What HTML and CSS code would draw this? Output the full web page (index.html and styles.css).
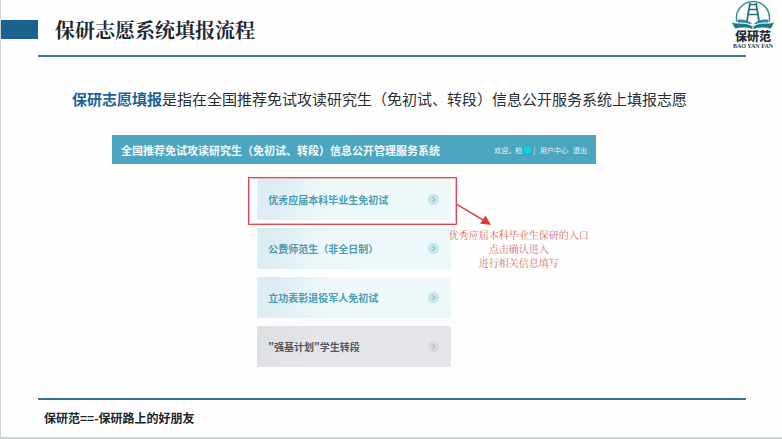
FILE: index.html
```html
<!DOCTYPE html>
<html lang="zh-CN">
<head>
<meta charset="utf-8">
<title>保研志愿系统填报流程</title>
<link rel="stylesheet" href="styles.css">
</head>
<body>
<div class="slide">
  <header class="head">
    <span class="marker"></span>
    <h1 class="title">保研志愿系统填报流程</h1>
    <div class="logo">
      <svg class="logo-mark" viewBox="0 0 44 30" aria-hidden="true">
        <path d="M6 22A16.500 16.500 0 1 1 38 22" fill="none" stroke="#3f8e9b" stroke-width="1.500"/>
        <path d="M19 3L16 21M25 3L28 21" fill="none" stroke="#2a7282" stroke-width="1.800"/>
        <path d="M19 4.500H25M18.500 9.500H25.500M17.500 14.500H26.500" stroke="#2a7282" stroke-width="1.600"/>
        <path d="M7 19.500Q17 19 21.500 24.500Q14 22 7 22.500ZM37 19.500Q27 19 22.500 24.500Q30 22 37 22.500Z" fill="#2d8ba0"/>
        <path d="M1 22.500L5 23.500Q17 23 21.500 26.500V29Q14 26.500 4 28.500ZM43 22.500L39 23.500Q27 23 22.500 26.500V29Q30 26.500 40 28.500Z" fill="#1b7891"/>
      </svg>
      <span class="logo-name">保研范</span>
      <span class="logo-latin">BAO YAN FAN</span>
    </div>
  </header>
  <main class="content">
    <p class="lead"><strong>保研志愿填报</strong>是指在全国推荐免试攻读研究生（免初试、转段）信息公开服务系统上填报志愿</p>
    <section class="panel">
      <div class="bar">
        <h2 class="bar-title">全国推荐免试攻读研究生（免初试、转段）信息公开管理服务系统</h2>
        <nav class="user">
          <span>欢迎，柏</span><i class="dot"></i><span>|</span>
          <a href="#">用户中心</a>
          <a href="#">退出</a>
        </nav>
      </div>
      <div class="entries">
        <a class="card" href="#"><span>优秀应届本科毕业生免初试</span><svg class="go" viewBox="0 0 11 11"><circle cx="5.500" cy="5.500" r="5.500"/><path d="M4.700 3.500L6.700 5.500L4.700 7.500"/></svg></a>
        <a class="card" href="#"><span>公费师范生（非全日制）</span><svg class="go" viewBox="0 0 11 11"><circle cx="5.500" cy="5.500" r="5.500"/><path d="M4.700 3.500L6.700 5.500L4.700 7.500"/></svg></a>
        <a class="card" href="#"><span>立功表彰退役军人免初试</span><svg class="go" viewBox="0 0 11 11"><circle cx="5.500" cy="5.500" r="5.500"/><path d="M4.700 3.500L6.700 5.500L4.700 7.500"/></svg></a>
        <a class="card muted" href="#"><span>"强基计划"学生转段</span><svg class="go" viewBox="0 0 11 11"><circle cx="5.500" cy="5.500" r="5.500"/><path d="M4.700 3.500L6.700 5.500L4.700 7.500"/></svg></a>
        <div class="frame"></div>
        <svg class="arrow" viewBox="0 0 36 24" aria-hidden="true"><path d="M0 2L28 18.500" stroke="#d94a4c" stroke-width="1.500"/><path d="M35 23L24 21.500L29.500 13.500Z" fill="#dc3b3d"/></svg>
        <p class="note">优秀应届本科毕业生保研的入口<br>点击确认进入<br>进行相关信息填写</p>
      </div>
    </section>
  </main>
  <footer class="foot">保研范==-保研路上的好朋友</footer>
</div>
</body>
</html>
```
FILE: styles.css
```css
* {
  box-sizing: border-box;
}

body {
  margin: 0;
  background: #fefefe;
  font-family: "Noto Sans CJK SC", sans-serif;
}

h1, h2, p {
  margin: 0;
}

a {
  color: inherit;
  text-decoration: none;
}

.slide {
  display: flex;
  flex-direction: column;
  min-height: 100vh;
  border-left: 1px solid #c9d3d8;
  border-bottom: 2px solid #cad8d5;
}

.head {
  position: relative;
  display: flex;
  align-items: center;
  height: 56px;
  padding: 3px 7px 0 0;
}

.head::after {
  content: "";
  position: absolute;
  left: 37px;
  right: 36px;
  top: 55px;
  height: 2px;
  background: #3a789d;
}

.marker {
  width: 37px;
  height: 19px;
  background: #1a618f;
}

.title {
  margin-left: 17px;
  color: #1f2733;
  font: 700 20px/28px "Noto Serif CJK SC", "Noto Sans CJK SC", serif;
}

.logo {
  display: flex;
  flex-direction: column;
  align-items: center;
  align-self: flex-start;
  width: 44px;
  margin: -3px 0 0 auto;
}

.logo-mark {
  width: 44px;
  height: 30px;
}

.logo-name {
  color: #222d33;
  font-size: 12px;
  font-weight: 900;
  line-height: 12px;
}

.logo-latin {
  margin-top: 1px;
  color: #333c40;
  font: 700 6px/6px "Liberation Serif", serif;
  white-space: nowrap;
}

.content {
  flex: 1;
}

.lead {
  margin: 31px 0 25px;
  padding-right: 24px;
  color: #2b2e33;
  font-size: 15px;
  line-height: 23px;
  text-align: center;
}

.lead strong {
  color: #1c6494;
}

.panel {
  width: 62%;
  margin-left: 14.2%;
}

.bar {
  display: flex;
  align-items: center;
  justify-content: space-between;
  height: 29px;
  padding: 0 9px;
  background: #4da6c0;
  color: #f3fbfd;
  white-space: nowrap;
}

.bar-title {
  font-size: 11px;
  font-weight: 700;
}

.user {
  display: flex;
  align-items: center;
  color: #e2f3f7;
  font-size: 7px;
}

.user a {
  margin-left: 5px;
}

.dot {
  width: 11px;
  height: 11px;
  border: 1px solid #4595a5;
  border-radius: 50%;
  background: #0bd0e9;
}

.entries {
  position: relative;
  display: grid;
  gap: 8px;
  width: 40%;
  margin: 15px 0 0 30%;
}

.card {
  display: flex;
  align-items: center;
  justify-content: space-between;
  height: 41px;
  padding: 0 12px 0 11px;
  border-radius: 2px;
  background:
    linear-gradient(120deg, #dcecf3 10%, transparent 35%),
    linear-gradient(205deg, #eef8fa 60%, #e3f2f7);
  color: #479db1;
  font-size: 10px;
  font-weight: 700;
}

.go {
  width: 11px;
  height: 11px;
  fill: #c5e4eb;
}

.go path {
  fill: none;
  stroke: #479db1;
}

.muted {
  background: linear-gradient(120deg, #dddee2, #e5e6ea 35%);
  color: #525761;
}

.muted .go {
  fill: #d8d9dc;
}

.muted .go path {
  stroke: #9a9ca2;
}

.frame {
  position: absolute;
  top: -2px;
  left: -9px;
  right: -6px;
  height: 48px;
  border: 1px solid #d84e50;
  outline: 1px solid #f0b5b5;
  outline-offset: -2px;
}

.arrow {
  position: absolute;
  top: 23px;
  left: calc(100% + 5px);
  width: 36px;
  height: 24px;
}

.note {
  position: absolute;
  top: 49px;
  left: calc(100% - 2px);
  color: #d66d6f;
  font: 400 10px/14px "Noto Serif CJK SC", "Noto Sans CJK SC", serif;
  text-align: center;
  white-space: nowrap;
}

.foot {
  margin: 0 36px 0 37px;
  padding: 9px 6px 10px;
  border-top: 2px solid #34709b;
  color: #20262a;
  font-size: 12px;
  font-weight: 700;
  line-height: 18px;
}
```
